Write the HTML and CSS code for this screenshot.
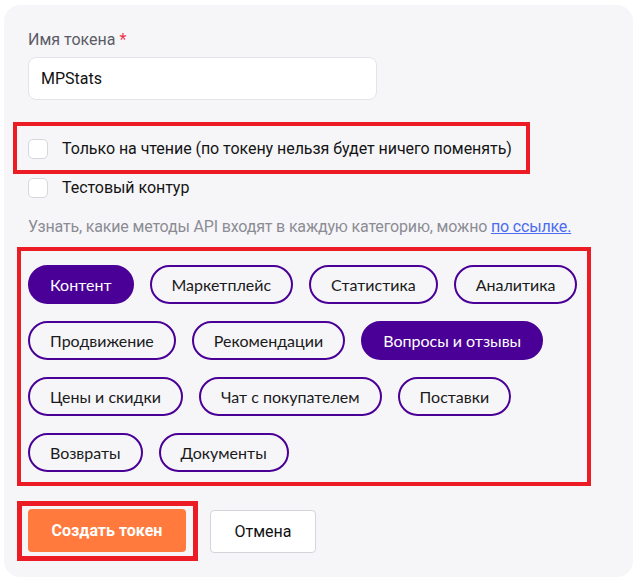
FILE: index.html
```html
<!doctype html>
<html lang="ru">
  <head>
    <meta charset="utf-8">
    <title>Новый токен</title>
    <link rel="stylesheet" href="styles.css">
  </head>
  <body>
    <form class="card">
      <label class="field-label" for="token-name">Имя токена <span class="req">*</span></label>
      <input class="text-input" id="token-name" type="text" value="MPStats">

      <div class="mark mark-check">
        <label class="check"><span class="box"></span>Только на чтение (по токену нельзя будет ничего поменять)</label>
      </div>
      <label class="check check-plain"><span class="box"></span>Тестовый контур</label>

      <p class="hint">Узнать, какие методы API входят в каждую категорию, можно <a href="#">по ссылке.</a></p>

      <div class="mark mark-chips">
        <span class="chip active">Контент</span>
        <span class="chip">Маркетплейс</span>
        <span class="chip">Статистика</span>
        <span class="chip">Аналитика</span>
        <span class="chip">Продвижение</span>
        <span class="chip">Рекомендации</span>
        <span class="chip active">Вопросы и отзывы</span>
        <span class="chip">Цены и скидки</span>
        <span class="chip">Чат с покупателем</span>
        <span class="chip">Поставки</span>
        <span class="chip">Возвраты</span>
        <span class="chip">Документы</span>
      </div>

      <div class="actions">
        <div class="mark mark-btn">
          <button type="button" class="btn btn-primary">Создать токен</button>
        </div>
        <button type="button" class="btn btn-secondary">Отмена</button>
      </div>
    </form>
  </body>
</html>
```

FILE: styles.css
```css
body {
  margin: 0;
  background: #fff;
  font-family: Roboto, "Noto Sans", Arial, sans-serif;
  color: #1a1a1a;
}
.card {
  display: flex;
  flex-direction: column;
  align-items: flex-start;
  box-sizing: border-box;
  width: 629px;
  margin: 5px 0 0 4px;
  padding: 25px 24px 16px;
  background: #f6f6f9;
  border-radius: 16px;
}
.field-label {
  font-size: 16px;
  line-height: 20px;
  color: #5c5c66;
}
.req {
  color: #f0324b;
}
.text-input {
  box-sizing: border-box;
  width: 349px;
  height: 43px;
  margin-top: 7px;
  padding: 0 12px;
  border: 1px solid #e3e3ea;
  border-radius: 8px;
  background: #fff;
  font-family: inherit;
  font-size: 16px;
  color: #111;
  outline: none;
}
.mark {
  box-sizing: border-box;
  border: 4px solid #ec1c24;
}
.mark-check {
  width: 517px;
  margin: 22px 0 0 -15px;
  padding: 13px 11px 11px;
}
.check {
  display: flex;
  align-items: center;
  gap: 14px;
  font-size: 16px;
  line-height: 20px;
  color: #141414;
  letter-spacing: -0.05px;
}
.check-plain {
  margin-top: 4px;
}
.box {
  box-sizing: border-box;
  width: 20px;
  height: 20px;
  border: 1px solid #d6d6de;
  border-radius: 5px;
  background: #fff;
}
.hint {
  margin: 19px 0 0;
  font-size: 16px;
  line-height: 20px;
  color: #8c8c94;
  letter-spacing: -0.17px;
}
.hint a {
  color: #4b6cf0;
}
.mark-chips {
  display: flex;
  flex-wrap: wrap;
  gap: 17px 16px;
  width: 574px;
  margin: 10px 0 0 -11px;
  padding: 14px 8px 10px 7px;
}
.chip {
  box-sizing: border-box;
  height: 39px;
  padding: 0 20px;
  border: 2px solid #4a0096;
  border-radius: 20px;
  font-family: Lato, "Noto Sans", sans-serif;
  font-size: 16px;
  line-height: 35px;
  color: #1a1a1a;
}
.chip.active {
  background: #4a0096;
  color: #fff;
}
.actions {
  display: flex;
  align-items: center;
  gap: 12px;
  margin: 15px 0 0 -11px;
}
.mark-btn {
  border-width: 5px;
  padding: 3px 7px 4px 6px;
}
.btn {
  box-sizing: border-box;
  height: 43px;
  border-radius: 4px;
  font-family: inherit;
  font-size: 16px;
  cursor: pointer;
}
.btn-primary {
  width: 158px;
  border: none;
  background: #ff7a3c;
  color: #fff;
  font-weight: 700;
}
.btn-secondary {
  width: 106px;
  border: 1px solid #d4d4da;
  background: #fff;
  color: #111;
}
```
